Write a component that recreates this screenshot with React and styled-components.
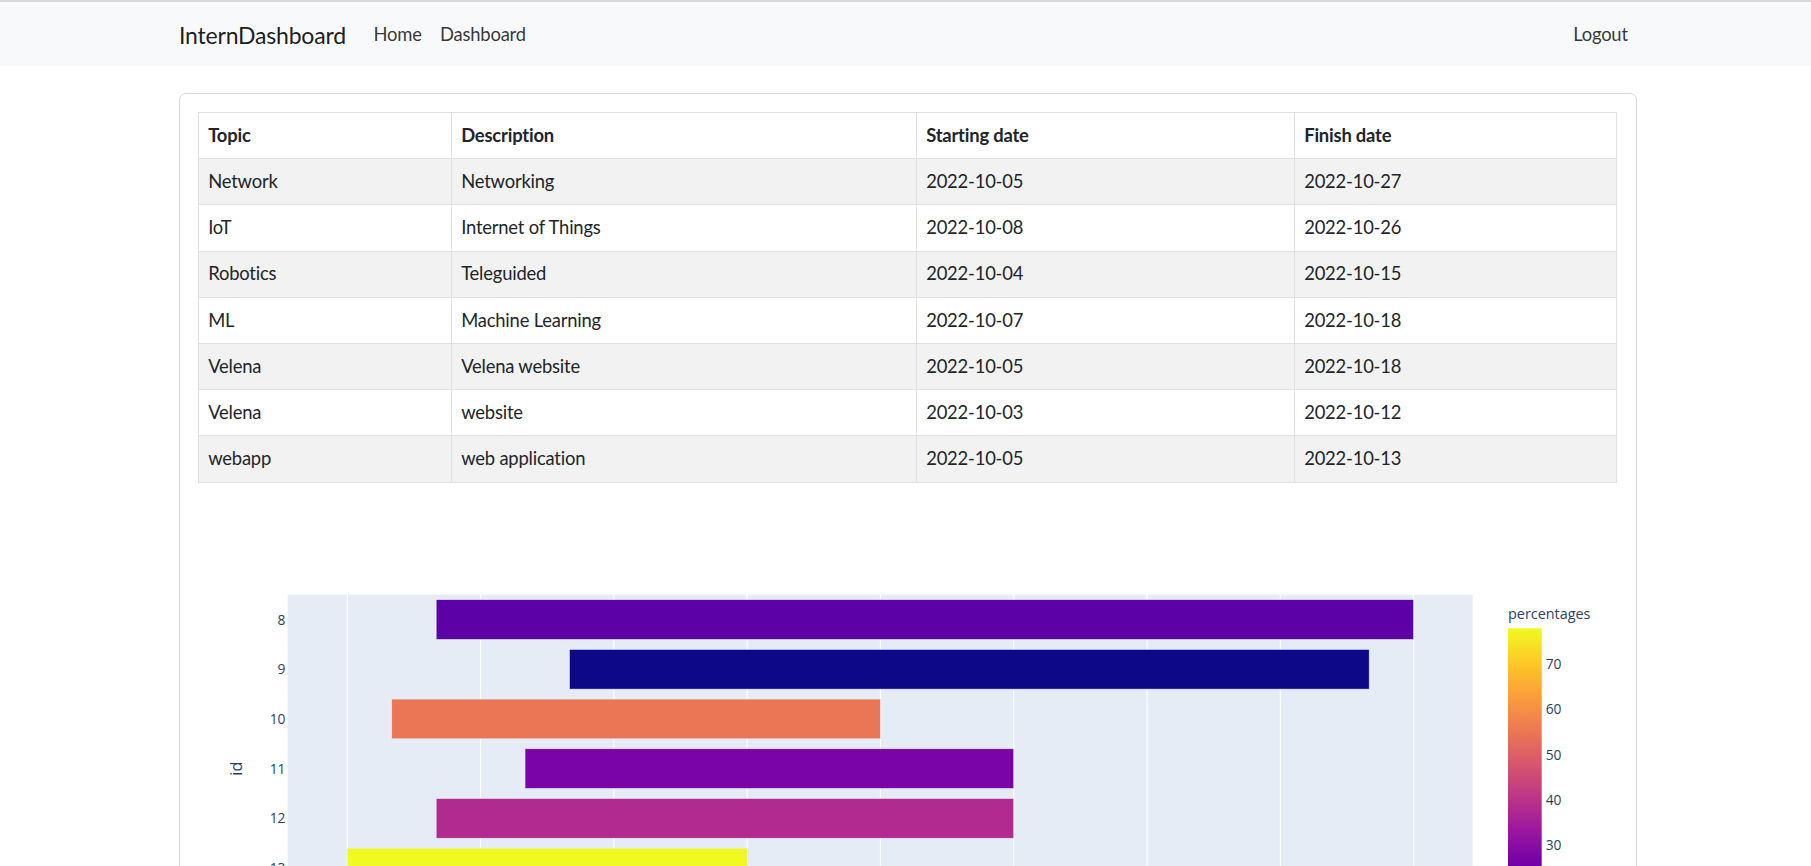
import React from "react";
import styled, { createGlobalStyle } from "styled-components";

const GlobalStyle = createGlobalStyle`
	html, body {
		margin: 0;
		padding: 0;
		overflow: hidden;
		background: #fff;
	}
	body {
		font-family: Lato, "Liberation Sans", sans-serif;
		font-size: 18.4px;
		line-height: 1.5;
		letter-spacing: -0.2px;
		color: #212529;
	}
`;

const TopBar = styled.nav`
	background: #f8f9fa;
	border-top: 2px solid #d9dadc;
	height: 64px;
	display: flex;
	align-items: center;
`;

const Container = styled.div`
	width: 1458px;
	margin: 2px 0 0 179px;
	display: flex;
	align-items: center;
`;

const Brand = styled.a`
	font-size: 23px;
	line-height: 34.5px;
	color: rgba(0, 0, 0, 0.9);
	margin-right: 18.4px;
	text-decoration: none;
`;

const NavLink = styled.a`
	padding: 0 9.2px;
	color: rgba(0, 0, 0, 0.8);
	text-decoration: none;
	line-height: 27.6px;
`;

const Spacer = styled.div`
	flex: 1;
`;

const Card = styled.section`
	box-sizing: border-box;
	width: 1458px;
	margin: 27px 0 0 179px;
	padding: 18px 19px 18px 18px;
	border: 1px solid #d9d9d9;
	border-radius: 7px;
	min-height: 1100px;
`;

const Table = styled.table`
	width: 100%;
	border-collapse: collapse;
	table-layout: fixed;
`;

const Th = styled.th`
	text-align: left;
	font-weight: 700;
	padding: 8.8px 9.2px;
	line-height: 27.6px;
	border: 1px solid #dee2e6;
	background: #fff;
`;

const Row = styled.tr`
	background: ${({ $striped }) => ($striped ? "#f2f2f2" : "#fff")};
`;

const Td = styled.td`
	padding: 8.8px 9.2px;
	line-height: 27.6px;
	border: 1px solid #dee2e6;
`;

const Chart = styled.svg`
	display: block;
	margin-top: 17px;
	font-family: "Open Sans", "Liberation Sans", sans-serif;
	letter-spacing: 0;
`;

const TickLabel = styled.text`
	font-size: ${({ $size }) => $size || 13.8}px;
	fill: #2a3f5f;
`;

const AxisTitle = styled.text`
	font-size: 16.1px;
	fill: #2a3f5f;
`;

const rows = [
	{ topic: "Network", desc: "Networking", start: "2022-10-05", finish: "2022-10-27", color: "#5c01a6" },
	{ topic: "IoT", desc: "Internet of Things", start: "2022-10-08", finish: "2022-10-26", color: "#0d0887" },
	{ topic: "Robotics", desc: "Teleguided", start: "2022-10-04", finish: "2022-10-15", color: "#eb7655" },
	{ topic: "ML", desc: "Machine Learning", start: "2022-10-07", finish: "2022-10-18", color: "#7a04a8" },
	{ topic: "Velena", desc: "Velena website", start: "2022-10-05", finish: "2022-10-18", color: "#b12a90" },
	{ topic: "Velena", desc: "website", start: "2022-10-03", finish: "2022-10-12", color: "#f0f921" },
	{ topic: "webapp", desc: "web application", start: "2022-10-05", finish: "2022-10-13", color: "#cc4778" },
];

const plasma = [
	"#0d0887", "#46039f", "#7201a8", "#9c179e", "#bd3786",
	"#d8576b", "#ed7953", "#fb9f3a", "#fdca26", "#f0f921",
];

// plot geometry (page pixels)
const PLOT = { x: 287.7, y: 594.7, w: 1185, h: 348 };
const BAND = 49.7;
const DAY = 44.43;
const dayX = (d) => 347.3 + (d - 3) * DAY;
const dayOf = (s) => Number(s.slice(8));

const CB = { x: 1508, top: 628.3, bottom: 931, w: 33.7 };
const cbY = (v) => CB.bottom - (v - 11.1) * 4.533;

export default function App() {
	return (
		<>
			<GlobalStyle />
			<TopBar>
				<Container>
					<Brand href='#'>InternDashboard</Brand>
					<NavLink href='#'>Home</NavLink>
					<NavLink href='#'>Dashboard</NavLink>
					<Spacer />
					<NavLink href='#'>Logout</NavLink>
				</Container>
			</TopBar>

			<Card>
				<Table>
					<colgroup>
						<col style={{ width: 253 }} />
						<col style={{ width: 465 }} />
						<col style={{ width: 378 }} />
						<col />
					</colgroup>
					<thead>
						<tr>
							<Th>Topic</Th>
							<Th>Description</Th>
							<Th>Starting date</Th>
							<Th>Finish date</Th>
						</tr>
					</thead>
					<tbody>
						{rows.map((r, i) => (
							<Row key={i} $striped={i % 2 === 0}>
								<Td>{r.topic}</Td>
								<Td>{r.desc}</Td>
								<Td>{r.start}</Td>
								<Td>{r.finish}</Td>
							</Row>
						))}
					</tbody>
				</Table>

				{/* plotly-like timeline */}
				<Chart width='1418' height='520' viewBox='198 500 1418 520'>
					<defs>
						<linearGradient id='plasma' x1='0' y1='1' x2='0' y2='0'>
							{plasma.map((c, i) => (
								<stop key={c} offset={i / (plasma.length - 1)} stopColor={c} />
							))}
						</linearGradient>
					</defs>
					<rect x={PLOT.x} y={PLOT.y} width={PLOT.w} height={PLOT.h} fill='#E5ECF6' />
					{Array.from({ length: 9 }).map((_, k) => {
						const x = dayX(3 + k * 3);
						return <line key={k} x1={x} x2={x} y1={PLOT.y} y2={PLOT.y + PLOT.h} stroke='#fff' strokeWidth='1.15' />;
					})}
					{rows.map((r, i) => {
						const x1 = dayX(dayOf(r.start));
						const x2 = dayX(dayOf(r.finish));
						return (
							<rect
								key={i}
								x={x1}
								y={PLOT.y + i * BAND + BAND * 0.1}
								width={x2 - x1}
								height={BAND * 0.8}
								fill={r.color}
								stroke='#E5ECF6'
								strokeWidth='0.6'
							/>
						);
					})}
					{rows.map((_, i) => (
						<TickLabel key={i} x='285.5' y={PLOT.y + i * BAND + BAND / 2} dy='0.36em' textAnchor='end'>
							{8 + i}
						</TickLabel>
					))}
					<AxisTitle x='0' y='0' textAnchor='middle' transform={`translate(242 ${PLOT.y + PLOT.h / 2}) rotate(-90)`}>
						id
					</AxisTitle>

					<TickLabel x={CB.x} y='619' $size={14.4}>
						percentages
					</TickLabel>
					<rect x={CB.x} y={CB.top} width={CB.w} height={CB.bottom - CB.top} fill='url(#plasma)' />
					{[20, 30, 40, 50, 60, 70].map((v) => (
						<TickLabel key={v} x={CB.x + CB.w + 4} y={cbY(v)} dy='0.36em'>
							{v}
						</TickLabel>
					))}
				</Chart>
			</Card>
		</>
	);
}
